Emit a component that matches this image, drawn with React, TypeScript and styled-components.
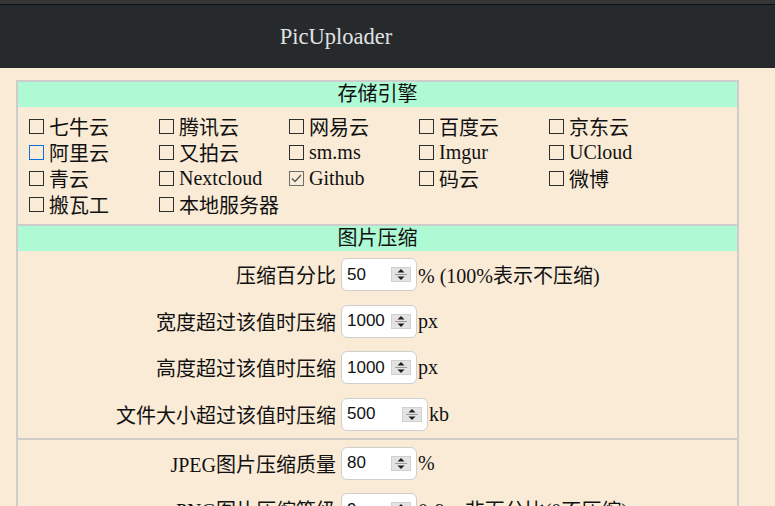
import React from "react";
import styled, { createGlobalStyle } from "styled-components";

const GlobalStyle = createGlobalStyle`
  html, body {
    margin: 0;
    padding: 0;
    background: #faebd7;
  }
  body {
    font-family: "Liberation Serif", "Noto Sans CJK SC", serif;
    color: #111;
    overflow: hidden;
  }
`;

const TopStrip = styled.div`
  height: 4px;
  background: #363636;
  border-bottom: 1px solid #111;
`;

const Header = styled.header`
  height: 63px;
  background: #262a2d;
  color: #e2e2e2;
  font-size: 22.5px;
  line-height: 63px;
  text-align: center;
  padding-right: 103px;
`;

const Panel = styled.div`
  margin: 12px 0 0 16px;
  width: 723px;
  box-sizing: border-box;
  border: 2px solid #cfcccb;
  border-bottom: none;
`;

const Section = styled.section<{ $first?: boolean }>`
  border-top: ${(p) => (p.$first ? "none" : "2px solid #cfcccb")};
`;

const SectionTitle = styled.div`
  height: 25px;
  line-height: 25px;
  background: #adfad5;
  text-align: center;
  font-size: 20px;
`;

const CheckGrid = styled.div`
  display: grid;
  grid-template-columns: repeat(5, 130px);
  grid-auto-rows: 26px;
  padding: 6px 0 7px 11px;
`;

const CheckItem = styled.label`
  display: flex;
  align-items: center;
  gap: 5px;
  font-size: 20px;
  white-space: nowrap;
`;

const Box = styled.span<{ $state?: "focus" | "checked" }>`
  width: 15px;
  height: 15px;
  box-sizing: border-box;
  flex: none;
  border: 1.5px solid
    ${(p) =>
      p.$state === "focus" ? "#0f6fe0" : p.$state === "checked" ? "#6e6e6e" : "#2e2e2e"};
  display: flex;
  align-items: center;
  justify-content: center;
  margin-top: 1px;
`;

const Form = styled.div`
  display: grid;
  grid-template-columns: 318px 1fr;
  column-gap: 5px;
  row-gap: 13.5px;
  padding: 7px 0;
  align-items: center;
`;

const Label = styled.div`
  text-align: right;
  font-size: 20px;
  white-space: nowrap;
`;

const Field = styled.div`
  display: flex;
  align-items: center;
  font-size: 20px;
  white-space: nowrap;
`;

const NumberBox = styled.div<{ $w: number }>`
  display: flex;
  align-items: center;
  width: ${(p) => p.$w}px;
  height: 33px;
  box-sizing: border-box;
  border: 1px solid #cfcfcf;
  border-radius: 6px;
  background: #fff;
  padding: 0 5px 0 5px;
  margin-right: 1px;
`;

const NumberInput = styled.input`
  flex: 1;
  min-width: 0;
  border: none;
  outline: none;
  background: transparent;
  padding: 0;
  font-family: "Liberation Sans", "DejaVu Sans", sans-serif;
  font-size: 17px;
  color: #111;
`;

const SpinSvg = styled.svg`
  flex: none;
  display: block;
`;

const Spinner = () => (
  <SpinSvg width="20" height="15" viewBox="0 0 20 15">
    <rect x="0" y="0" width="20" height="15" fill="#e3e3e3" />
    <rect x="0.5" y="0.5" width="19" height="14" fill="none" stroke="#d0d0d0" />
    <line x1="4" y1="7.5" x2="16" y2="7.5" stroke="#9a9a9a" strokeWidth="1" />
    <polygon points="6.5,5.5 13.5,5.5 10,2" fill="#1e1e1e" />
    <polygon points="6.5,9.5 13.5,9.5 10,13" fill="#1e1e1e" />
  </SpinSvg>
);

const CheckMark = () => (
  <svg width="11" height="9" viewBox="0 0 11 9">
    <polyline points="1,4.5 4,7.5 10,1" fill="none" stroke="#555" strokeWidth="1.3" />
  </svg>
);

type Engine = { name: string; state?: "focus" | "checked" };

const engines: Engine[] = [
  { name: "七牛云" },
  { name: "腾讯云" },
  { name: "网易云" },
  { name: "百度云" },
  { name: "京东云" },
  { name: "阿里云", state: "focus" },
  { name: "又拍云" },
  { name: "sm.ms" },
  { name: "Imgur" },
  { name: "UCloud" },
  { name: "青云" },
  { name: "Nextcloud" },
  { name: "Github", state: "checked" },
  { name: "码云" },
  { name: "微博" },
  { name: "搬瓦工" },
  { name: "本地服务器" },
];

type Row = { label: string; value: string; suffix: string; w?: number };

const compressRows: Row[] = [
  { label: "压缩百分比", value: "50", suffix: "% (100%表示不压缩)" },
  { label: "宽度超过该值时压缩", value: "1000", suffix: "px" },
  { label: "高度超过该值时压缩", value: "1000", suffix: "px" },
  { label: "文件大小超过该值时压缩", value: "500", suffix: "kb", w: 87 },
];

const qualityRows: Row[] = [
  { label: "JPEG图片压缩质量", value: "80", suffix: "%" },
  { label: "PNG图片压缩等级", value: "9", suffix: "0-9，非百分比(0不压缩)" },
];

const FormRows = ({ rows }: { rows: Row[] }) => (
  <Form>
    {rows.map((r) => (
      <React.Fragment key={r.label}>
        <Label>{r.label}</Label>
        <Field>
          <NumberBox $w={r.w ?? 76}>
            <NumberInput type="text" defaultValue={r.value} />
            <Spinner />
          </NumberBox>
          {r.suffix}
        </Field>
      </React.Fragment>
    ))}
  </Form>
);

export default function App() {
  return (
    <>
      <GlobalStyle />
      <TopStrip />
      <Header>PicUploader</Header>
      <Panel>
        <Section $first>
          <SectionTitle>存储引擎</SectionTitle>
          <CheckGrid>
            {engines.map((e) => (
              <CheckItem key={e.name}>
                <Box $state={e.state}>{e.state === "checked" && <CheckMark />}</Box>
                {e.name}
              </CheckItem>
            ))}
          </CheckGrid>
        </Section>
        <Section>
          <SectionTitle>图片压缩</SectionTitle>
          <FormRows rows={compressRows} />
        </Section>
        <Section>
          <FormRows rows={qualityRows} />
        </Section>
      </Panel>
    </>
  );
}
